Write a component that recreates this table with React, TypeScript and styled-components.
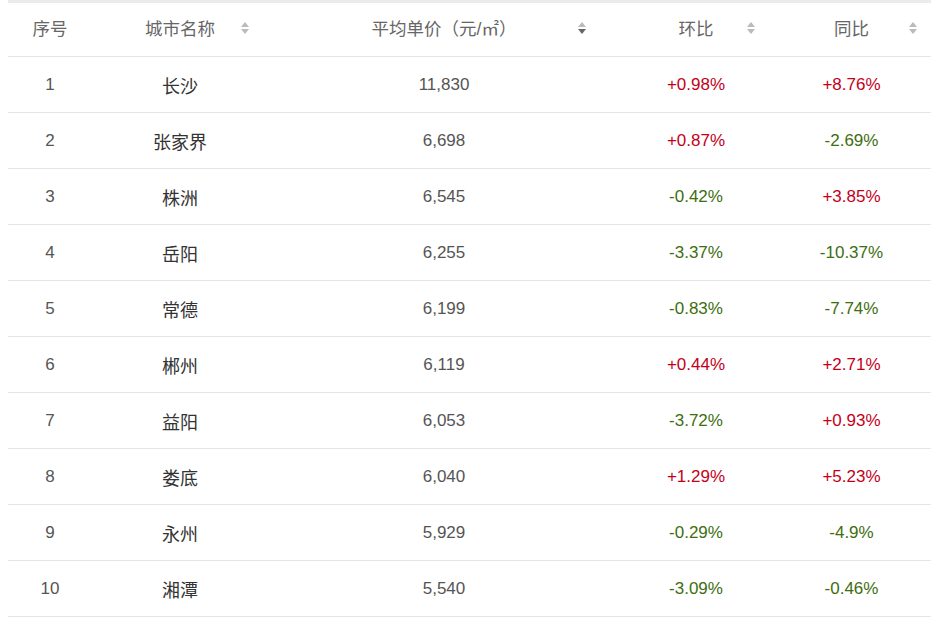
import React from 'react';
import styled, { createGlobalStyle } from 'styled-components';

const GlobalStyle = createGlobalStyle`
  body {
    margin: 0 8px;
    background: #fff;
    font-family: "Liberation Sans", Arial, "Noto Sans CJK SC", sans-serif;
  }
`;

interface Row {
  id: number;
  city: string;
  price: string;
  mom: string;
  yoy: string;
}

const rows: Row[] = [
  { id: 1, city: '长沙', price: '11,830', mom: '+0.98%', yoy: '+8.76%' },
  { id: 2, city: '张家界', price: '6,698', mom: '+0.87%', yoy: '-2.69%' },
  { id: 3, city: '株洲', price: '6,545', mom: '-0.42%', yoy: '+3.85%' },
  { id: 4, city: '岳阳', price: '6,255', mom: '-3.37%', yoy: '-10.37%' },
  { id: 5, city: '常德', price: '6,199', mom: '-0.83%', yoy: '-7.74%' },
  { id: 6, city: '郴州', price: '6,119', mom: '+0.44%', yoy: '+2.71%' },
  { id: 7, city: '益阳', price: '6,053', mom: '-3.72%', yoy: '+0.93%' },
  { id: 8, city: '娄底', price: '6,040', mom: '+1.29%', yoy: '+5.23%' },
  { id: 9, city: '永州', price: '5,929', mom: '-0.29%', yoy: '-4.9%' },
  { id: 10, city: '湘潭', price: '5,540', mom: '-3.09%', yoy: '-0.46%' },
];

const columns = [
  { title: '序号', width: 84, sort: false, iconRight: 0, desc: false },
  { title: '城市名称', width: 176, sort: true, iconRight: 19, desc: false },
  { title: '平均单价（元/㎡）', width: 352, sort: true, iconRight: 34, desc: true },
  { title: '环比', width: 152, sort: true, iconRight: 17, desc: false },
  { title: '同比', width: 159, sort: true, iconRight: 14, desc: false },
];

const Table = styled.table`
  width: 100%;
  border-collapse: collapse;
  table-layout: fixed;
  border-top: 3px solid #ebebeb;
`;

const HeadCell = styled.th`
  position: relative;
  height: 48px;
  padding: 0 0 5px;
  font-weight: normal;
  font-size: 17.5px;
  color: #666;
  text-align: center;
  border-bottom: 1px solid #e6e6e6;
`;

const SortIcon = styled.span<{ $right: number }>`
  position: absolute;
  top: 50%;
  right: ${({ $right }) => $right}px;
  transform: translateY(-50%);
  margin-top: -2px;
  display: flex;
  flex-direction: column;
  gap: 2px;
`;

const Arrow = styled.span<{ $up?: boolean; $active?: boolean }>`
  width: 0;
  height: 0;
  border-left: 4.5px solid transparent;
  border-right: 4.5px solid transparent;
  ${({ $up, $active }) =>
    $up
      ? `border-bottom: 5px solid ${$active ? '#666' : '#bbb'};`
      : `border-top: 5px solid ${$active ? '#666' : '#bbb'};`}
`;

const BodyRow = styled.tr`
  height: 56px;
  border-bottom: 1px solid #e6e6e6;
`;

const Cell = styled.td<{ $tone?: 'up' | 'down' | 'num' | 'text' }>`
  padding: 0;
  text-align: center;
  font-size: ${({ $tone }) => ($tone === 'text' ? '18px' : '17px')};
  color: ${({ $tone }) =>
    $tone === 'up' ? '#c3001a' : $tone === 'down' ? '#3d6e0f' : $tone === 'num' ? '#555' : '#333'};
`;

const tone = (v: string) => (v.startsWith('+') ? 'up' : 'down');

const App = () => (
  <>
    <GlobalStyle />
    <Table>
      <colgroup>
        {columns.map((c) => (
          <col key={c.title} style={{ width: c.width }} />
        ))}
      </colgroup>
      <thead>
        <tr>
          {columns.map((c) => (
            <HeadCell key={c.title}>
              {c.title}
              {c.sort && (
                <SortIcon $right={c.iconRight}>
                  <Arrow $up />
                  <Arrow $active={c.desc} />
                </SortIcon>
              )}
            </HeadCell>
          ))}
        </tr>
      </thead>
      <tbody>
        {rows.map((r) => (
          <BodyRow key={r.id}>
            <Cell $tone="num">{r.id}</Cell>
            <Cell $tone="text">{r.city}</Cell>
            <Cell $tone="num">{r.price}</Cell>
            <Cell $tone={tone(r.mom)}>{r.mom}</Cell>
            <Cell $tone={tone(r.yoy)}>{r.yoy}</Cell>
          </BodyRow>
        ))}
      </tbody>
    </Table>
  </>
);

export default App;
